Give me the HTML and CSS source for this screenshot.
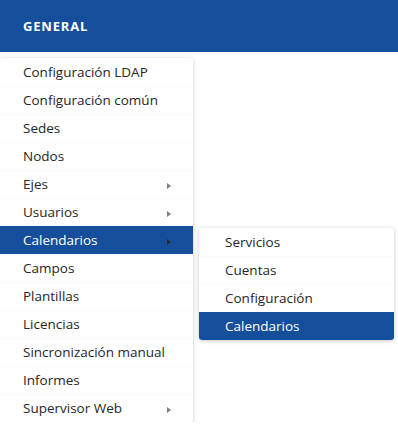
FILE: index.html
```html
<!DOCTYPE html>
<html lang="es">
<head>
  <meta charset="UTF-8">
  <title>General</title>
  <link rel="stylesheet" href="styles.css">
</head>
<body>
  <div class="header">GENERAL</div>

  <ul class="menu">
    <li>Configuración LDAP</li>
    <li>Configuración común</li>
    <li>Sedes</li>
    <li>Nodos</li>
    <li class="has-sub">Ejes</li>
    <li class="has-sub">Usuarios</li>
    <li class="has-sub active open">Calendarios
      <ul class="menu submenu">
        <li>Servicios</li>
        <li>Cuentas</li>
        <li>Configuración</li>
        <li class="active">Calendarios</li>
      </ul>
    </li>
    <li>Campos</li>
    <li>Plantillas</li>
    <li>Licencias</li>
    <li>Sincronización manual</li>
    <li>Informes</li>
    <li class="has-sub">Supervisor Web</li>
  </ul>
</body>
</html>
```

FILE: styles.css
```css
body, html {
  margin: 0;
  padding: 0;
  background: #ffffff;
  font-family: 'Open Sans', sans-serif;
  color: #262626;
}

.header {
  height: 52px;
  line-height: 52px;
  padding-left: 23px;
  background: #154f9b;
  color: white;
  font-size: 13px;
  font-weight: bold;
  letter-spacing: 0.8px;
}

.menu {
  list-style: none;
  margin: 6px 0 0 0;
  padding: 0;
  width: 193px;
  background: white;
  border-radius: 0 3px 3px 0;
  box-shadow: 0 1px 4px rgba(0, 0, 0, 0.22);
}

.menu li {
  position: relative;
  height: 28px;
  line-height: 27px;
  padding-left: 23px;
  font-size: 13.5px;
  border-top: 1px solid #fafafa;
  box-sizing: border-box;
}

.menu li:first-child {
  border-top-color: transparent;
}

.menu li.has-sub::after {
  content: "";
  position: absolute;
  right: 22px;
  top: 12px;
  border-left: 4px solid #808080;
  border-top: 3.5px solid transparent;
  border-bottom: 3.5px solid transparent;
}

.menu li.active {
  background: #154f9b;
  color: white;
  border-top-color: #154f9b;
}

.menu li.active::after {
  border-left-color: #2a2a2a;
}

.submenu {
  position: absolute;
  left: 199px;
  top: 1px;
  margin: 0;
  width: 195px;
  border-radius: 3px;
  color: #262626;
  overflow: hidden;
}

.submenu li {
  padding-left: 26px;
}
```
